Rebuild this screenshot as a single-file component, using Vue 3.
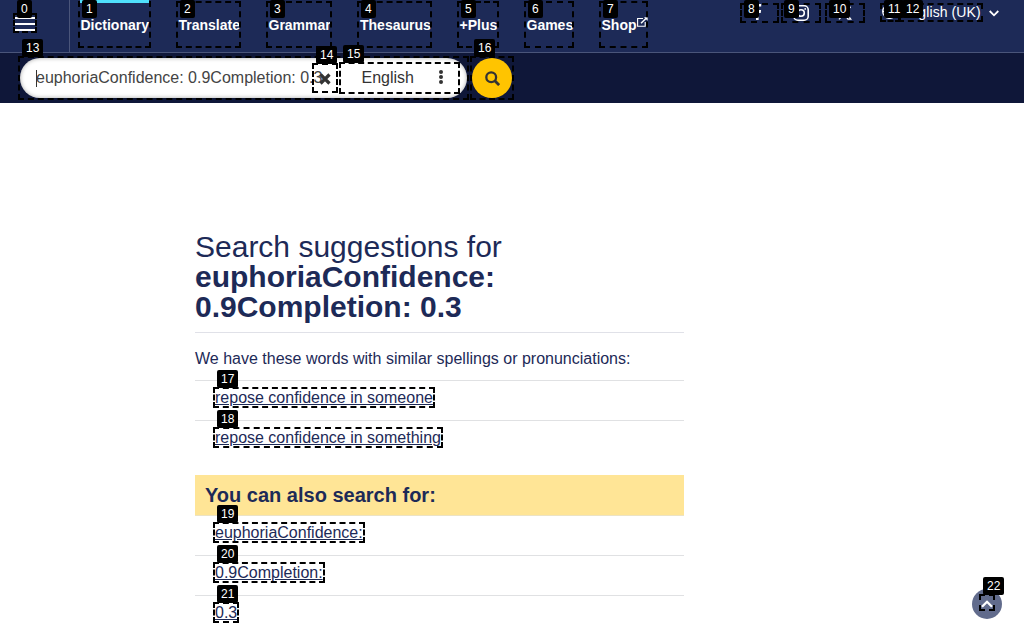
<script setup>
const nav = [
  { label: 'Dictionary', left: 80, width: 69, active: true },
  { label: 'Translate', left: 178, width: 61 },
  { label: 'Grammar', left: 268, width: 62 },
  { label: 'Thesaurus', left: 359.5, width: 71 },
  { label: '+Plus', left: 459, width: 38 },
  { label: 'Games', left: 526, width: 46 },
  { label: 'Shop', left: 601, width: 45, external: true },
].map((item, i, all) => ({
  ...item,
  gap: item.left - (i ? all[i - 1].left + all[i - 1].width : 70),
}))

const similar = ['repose confidence in someone', 'repose confidence in something']
const also = ['euphoriaConfidence:', '0.9Completion:', '0.3']

// x, y, right, bottom of each outlined element, then its tag's x and y
const marks = [
  [13, 13, 37, 33, 17, 0], [78, 1, 151, 48, 82, 0], [176, 1, 241, 48, 180, 0],
  [266, 1, 332, 48, 270, 0], [357, 1, 432, 48, 361, 0], [457, 1, 499, 48, 461, 0],
  [524, 1, 574, 48, 528, 0], [599, 1, 648, 48, 603, 0], [740, 3, 779, 23, 744, 0],
  [781, 3, 821, 23, 784, 0], [825, 3, 865, 23, 829, 0], [880, 3, 901, 22, 884, 0],
  [898, 3, 983, 22, 902, 0], [18, 56, 469, 100, 22, 39], [312, 63, 338, 93, 316, 46],
  [339, 62, 460, 94, 343, 45], [470, 56, 514, 100, 474, 39], [213, 387, 435, 408, 217, 370],
  [213, 427, 443, 448, 217, 410], [213, 522, 365, 543, 217, 505], [213, 562, 325, 583, 217, 545],
  [213, 602, 239, 623, 217, 585], [979, 594, 995, 611, 983, 577],
]
const box = (m) => ({ left: m[0] + 'px', top: m[1] + 'px', width: m[2] - m[0] + 'px', height: m[3] - m[1] + 'px' })
const tag = (m) => ({ left: m[4] + 'px', top: m[5] + 'px' })
</script>

<template>
  <div class="page">
    <header class="top">
      <div class="burger"><i></i><i></i><i></i></div>
      <nav class="nav">
        <a v-for="n in nav" :key="n.label" :class="{ active: n.active }" :style="{ marginLeft: n.gap + 'px', width: n.width + 'px' }">
          <span>{{ n.label }}</span>
          <svg v-if="n.external" class="ext" width="11" height="10" viewBox="0 0 11 10" fill="none" stroke="#fff">
            <path d="M6 1.5H.6v7.8h7.6V5" stroke-width="1.1" />
            <path d="M4 6.2 9.2 1.2" stroke-width="1.5" />
            <path d="M7 .2h3.6v3.6z" fill="#fff" stroke="none" />
          </svg>
        </a>
      </nav>
      <div class="social">
        <svg width="20" height="20" viewBox="0 0 20 20" class="fb"><path d="M8 19v-7H5.5V9H8V7c0-2.6 1.5-4 3.8-4h1.4v2.6h-1.3c-1 0-1.3.6-1.3 1.4v2h2.5l-.4 3h-2.1v7z" fill="#fff" /></svg>
        <svg width="16" height="16" viewBox="0 0 16 16" class="ig" fill="none" stroke="#fff" stroke-width="1.6"><rect x=".8" y=".8" width="14.4" height="14.4" rx="4" /><circle cx="8" cy="8" r="3.3" /><circle cx="12.2" cy="3.9" r=".9" fill="#fff" stroke="none" /></svg>
        <svg width="14" height="14" viewBox="0 0 14 14" class="xx" fill="none" stroke="#fff" stroke-width="1.3"><path d="M1 .8h2.8l9 12.4H10zM12.6.8 1 13.4" /></svg>
      </div>
      <div class="locale">
        <svg width="15" height="15" viewBox="0 0 15 15" fill="none" stroke="#fff" stroke-width="1.3"><circle cx="7.5" cy="7.5" r="6.8" /><ellipse cx="7.5" cy="7.5" rx="3" ry="6.8" /><path d="M1 7.5h13" /></svg>
        <span>English (UK)</span>
        <svg class="chev" width="10" height="7" viewBox="0 0 10 7" fill="none" stroke="#fff" stroke-width="1.8"><path d="m.7 1 4.3 4.3L9.3 1" /></svg>
      </div>
    </header>

    <div class="searchbar">
      <div class="field">
        <i class="caret"></i>
        <div class="query">euphoriaConfidence: 0.9Completion: 0.3</div>
        <svg class="clear" width="12" height="12" viewBox="0 0 12 12" stroke="#333" stroke-width="3.2"><path d="m1.5 1.5 9 9m0-9-9 9" /></svg>
        <span class="lang">English</span>
        <svg class="dots" width="4" height="14" viewBox="0 0 4 14" fill="#333"><circle cx="2" cy="2" r="2" /><circle cx="2" cy="7" r="2" /><circle cx="2" cy="12" r="2" /></svg>
      </div>
      <div class="go">
        <svg width="15" height="15" viewBox="0 0 15 15" fill="none" stroke="#333" stroke-width="2.3"><circle cx="6.2" cy="6.2" r="4.9" /><path d="m9.8 9.8 4.3 4.3" stroke-width="2.7" /></svg>
      </div>
    </div>

    <main>
      <h1>Search suggestions for <b>euphoriaConfidence: 0.9Completion: 0.3</b></h1>
      <p>We have these words with similar spellings or pronunciations:</p>
      <ul><li v-for="s in similar" :key="s"><a>{{ s }}</a></li></ul>
      <h2>You can also search for:</h2>
      <ul class="also"><li v-for="s in also" :key="s"><a>{{ s }}</a></li></ul>
    </main>

    <div class="totop">
      <svg width="12" height="8" viewBox="0 0 12 8" fill="none" stroke="#fff" stroke-width="2.3"><path d="m1 6.8 5-5 5 5" /></svg>
    </div>

    <template v-for="(m, i) in marks" :key="i">
      <div class="mark" :style="box(m)"></div>
      <div class="tag" :style="tag(m)">{{ i }}</div>
    </template>
  </div>
</template>

<style>
body { margin: 0; background: #fff; overflow: hidden; }
</style>

<style scoped>
* { box-sizing: border-box; }
.page { position: relative; width: 1024px; height: 629px; overflow: hidden; font-family: "Liberation Sans", Arial, sans-serif; font-size: 16px; color: #1d2a57; }
.top { height: 53px; display: flex; background: #1d2a57; border-bottom: 1px solid #4a557a; color: #fff; }
.burger { width: 70px; height: 52px; border-right: 1px solid #4a557a; padding: 17px 0 0 15px; display: flex; flex-direction: column; gap: 4px; flex: none; position: relative; z-index: 1; }
.burger i { width: 20px; height: 2px; background: #fff; }
.nav { display: flex; width: 670px; flex: none; }
.nav a { flex: none; height: 52px; border-top: 3px solid transparent; font-weight: bold; font-size: 14px; line-height: 16px; padding-top: 14px; white-space: nowrap; display: flex; padding-left: .5px; }
.nav a.active { border-color: #4fe0fc; position: relative; z-index: 1; }
.ext { flex: none; }
.social { display: flex; width: 142px; flex: none; }
.fb { margin: 1px 0 0 8px; }
.ig { margin: 5px 0 0 25px; }
.xx { margin: 6px 0 0 29px; }
.locale { display: flex; font-size: 14px; line-height: 16px; padding-top: 4px; }
.locale span { margin-left: 4px; width: 81px; white-space: nowrap; letter-spacing: .1px; }
.chev { margin: 6px 0 0 7px; }
.searchbar { height: 50px; background: #0f1739; padding: 5px 0 0 20px; display: flex; gap: 5px; }
.field { width: 447px; height: 40px; border-radius: 20px; background: #fff; box-shadow: inset 0 0 4px rgba(0, 0, 0, .35); display: flex; align-items: center; color: #444; padding-left: 16px; }
.caret { width: 1px; height: 17px; background: #333; margin-right: -1px; }
.query { width: 283px; white-space: nowrap; line-height: 20px; flex: none; }
.clear { margin-top: 2px; flex: none; }
.lang { margin-left: 30.5px; width: 53px; color: #333; line-height: 20px; }
.dots { margin: -2px 0 0 24px; }
.go { width: 40px; height: 40px; border-radius: 50%; background: #ffc400; display: flex; align-items: center; justify-content: center; }
main { width: 489px; margin: 129px 0 0 195px; }
h1 { margin: 0; padding-bottom: 10px; border-bottom: 1px solid #e0e1e8; font-size: 30px; line-height: 30px; font-weight: normal; }
p { margin: 16px 0 11px; line-height: 20px; white-space: nowrap; }
ul { list-style: none; margin: 0; padding: 0; }
li { height: 40px; border-top: 1px solid #e0e1e3; padding: 7px 0 0 20px; line-height: 20px; }
li a { text-decoration: underline; }
h2 { margin: 15px 0 0; height: 40px; background: #ffe596; padding-left: 10px; font-size: 20px; line-height: 40px; }
.also li:first-child { border-top-color: #ece3c4; }
.totop { position: absolute; left: 972px; top: 589px; width: 30px; height: 30px; border-radius: 50%; background: #616b8c; display: flex; align-items: center; justify-content: center; }
.mark { position: absolute; border: 2px dashed #000; }
.tag { position: absolute; z-index: 2; height: 18px; padding: 0 4px; background: #000; border-radius: 2px; color: #fff; font-size: 12px; line-height: 18px; }
</style>
